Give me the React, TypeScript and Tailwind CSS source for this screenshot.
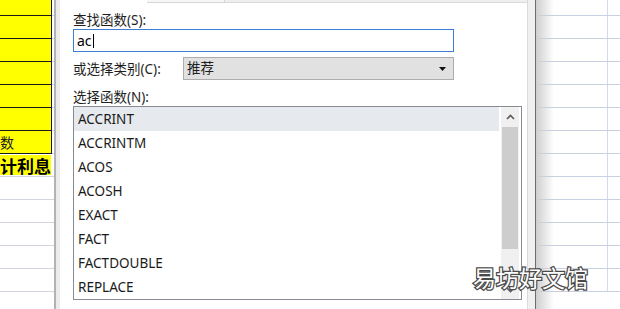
import React from "react";

/* ─── Data ─── */

const functions = [
  "ACCRINT",
  "ACCRINTM",
  "ACOS",
  "ACOSH",
  "EXACT",
  "FACT",
  "FACTDOUBLE",
  "REPLACE",
];

const sheetRows = Array.from({ length: 13 }, (_, i) => i);

/* ─── Left sheet column ─── */

function LeftSheet() {
  return (
    <div className="flex flex-col w-[54px] shrink-0 overflow-hidden">
      {sheetRows.map((i) => {
        const yellow = i <= 6;
        const h = i === 0 ? "h-[16px]" : "h-[23px]";
        return (
          <div key={i} className={`flex ${h} shrink-0`}>
            <div
              className={`w-[52px] shrink-0 overflow-hidden flex items-center ${
                yellow
                  ? "bg-[#ffff00] border-b border-r border-[#1a1a1a]"
                  : "border-b border-[#cfd4de]"
              }`}
            >
              {i === 6 && (
                <span className="text-[14px] leading-none text-[#222] font-['Noto_Sans_CJK_SC',sans-serif]">
                  数
                </span>
              )}
              {i === 7 && (
                <span className="w-[51px] h-[20px] bg-[#ffff00] flex items-center justify-end text-[17px] leading-none font-bold text-black whitespace-nowrap font-['Noto_Sans_CJK_SC',sans-serif]">
                  计利息
                </span>
              )}
            </div>
            <div className="flex-1 border-b border-[#cfd4de]" />
          </div>
        );
      })}
    </div>
  );
}

/* ─── Right sheet area ─── */

function RightSheet() {
  return (
    <div className="relative flex-1 overflow-hidden bg-white">
      <div className="flex flex-col">
        {sheetRows.map((i) => (
          <div
            key={i}
            className={`flex ${i === 0 ? "h-[16px]" : "h-[23px]"} shrink-0 border-b border-[#c8cfe0]`}
          >
            <div className="w-[72px] shrink-0 border-r border-[#d3d9e8]" />
            <div className="flex-1" />
          </div>
        ))}
      </div>
      <div className="absolute inset-y-0 left-0 w-[18px] bg-gradient-to-r from-[#cfcfcf] to-transparent" />
    </div>
  );
}

/* ─── Dialog ─── */

function Dialog() {
  return (
    <div className="flex h-full w-[482px] shrink-0">
      <div className="w-[2px] bg-[#b2b2b2]" />
      <div className="w-[4px] bg-[#ececec]" />

      <div className="flex flex-col w-[467px] bg-white">
        {/* tab strip remnant */}
        <div className="flex h-[3px] shrink-0">
          <div className="w-[87px]" />
          <div className="w-[78px] bg-[#f7f7f7] border-b border-r border-[#d6d6d6]" />
          <div className="flex-1 bg-[#efefef] border-b border-[#dadada]" />
        </div>

        <div className="flex flex-col pl-[13px] pr-[5px] text-[13.5px] text-[#1e1e1e] font-['Noto_Sans','Noto_Sans_CJK_SC',sans-serif]">
          <div className="mt-[8px] h-[18px] leading-[18px]">查找函数(S):</div>

          <div className="flex items-center h-[23px] w-[381px] border border-[#3c7fd2] pl-[3px]">
            <span className="text-[14px] leading-none text-black">ac</span>
            <span className="ml-px w-px h-[14px] bg-black" />
          </div>

          <div className="flex items-center mt-[5px] h-[23px]">
            <div className="w-[110px] leading-[18px]">或选择类别(C):</div>
            <div className="flex items-center justify-between w-[271px] h-[23px] bg-[#e1e1e1] border border-[#adadad] pl-[3px] pr-[7px]">
              <span className="leading-none">推荐</span>
              <svg width="7" height="4" viewBox="0 0 7 4">
                <polygon points="0,0 7,0 3.5,4" fill="#111" />
              </svg>
            </div>
          </div>

          <div className="mt-[8px] h-[18px] leading-[18px]">选择函数(N):</div>

          <div className="flex w-[449px] h-[194px] border border-[#868b95]">
            <div className="flex flex-col w-[425px]">
              {functions.map((fn, i) => (
                <div
                  key={fn}
                  className={`flex items-center h-[24px] shrink-0 pl-[4px] text-[13.5px] text-[#1a1a1a] ${
                    i === 0 ? "bg-[#e6e9ed]" : ""
                  }`}
                >
                  {fn}
                </div>
              ))}
            </div>

            <div className="w-[2px]" />

            {/* scrollbar */}
            <div className="flex flex-col w-[18px] bg-[#f0f0f0]">
              <div className="flex items-center justify-center h-[20px] shrink-0">
                <svg width="9" height="6" viewBox="0 0 9 6">
                  <path d="M1 5 L4.5 1.5 L8 5" fill="none" stroke="#5a5a5a" strokeWidth="1.6" />
                </svg>
              </div>
              <div className="mx-px h-[122px] shrink-0 bg-[#cdcdcd]" />
              <div className="flex-1" />
              <div className="flex items-center justify-center h-[18px] shrink-0">
                <svg width="9" height="6" viewBox="0 0 9 6">
                  <path d="M1 1 L4.5 4.5 L8 1" fill="none" stroke="#5a5a5a" strokeWidth="1.6" />
                </svg>
              </div>
            </div>
          </div>
        </div>
      </div>

      <div className="w-px bg-[#dadada]" />
      <div className="w-[7px] bg-[#f0f0f0]" />
      <div className="w-px bg-[#6d6d6d]" />
    </div>
  );
}

/* ─── Page ─── */

export default function App() {
  return (
    <div className="relative flex w-[620px] h-[309px] overflow-hidden bg-white">
      <LeftSheet />
      <Dialog />
      <RightSheet />

      {/* watermark */}
      <div className="absolute left-[473px] top-[262px] text-[23px] leading-[30px] text-white whitespace-nowrap font-['Noto_Sans_CJK_SC',sans-serif] [-webkit-text-stroke:2.5px_#4a4a4a] [paint-order:stroke_fill]">
        易坊好文馆
      </div>
    </div>
  );
}
